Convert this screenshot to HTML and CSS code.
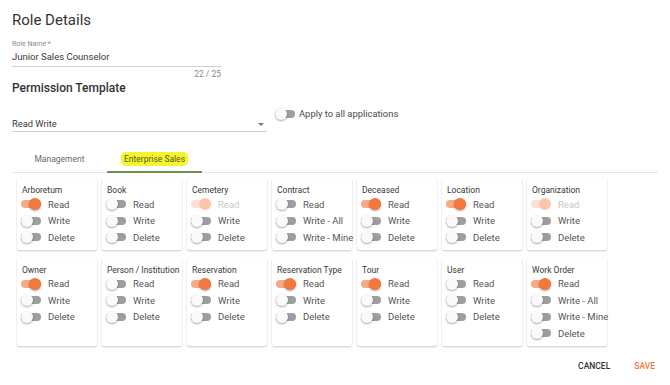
FILE: index.html
```html
<!DOCTYPE html>
<html>
<head>
	<meta charset="utf-8">
	<title>Role Details</title>
	<link rel="stylesheet" href="styles.css">
</head>
<body>

<div class="page">
	<h1>Role Details</h1>

	<div class="field">
		<label class="flabel">Role Name *</label>
		<div class="finput">Junior Sales Counselor</div>
		<div class="counter">22 / 25</div>
	</div>

	<h2>Permission Template</h2>

	<div class="template">
		<div class="select">
			<span>Read Write</span>
			<span class="arrow"></span>
		</div>
		<div class="apply">
			<span class="sw"></span>
			<span>Apply to all applications</span>
		</div>
	</div>

	<div class="tabs">
		<div class="tab">Management</div>
		<div class="tab active"><span class="hl">Enterprise Sales</span></div>
	</div>

	<div class="cards">
		<div class="card">
			<div class="ctitle">Arboretum</div>
			<div class="perm"><span class="sw on"></span>Read</div>
			<div class="perm"><span class="sw"></span>Write</div>
			<div class="perm"><span class="sw"></span>Delete</div>
		</div>
		<div class="card">
			<div class="ctitle">Book</div>
			<div class="perm"><span class="sw"></span>Read</div>
			<div class="perm"><span class="sw"></span>Write</div>
			<div class="perm"><span class="sw"></span>Delete</div>
		</div>
		<div class="card">
			<div class="ctitle">Cemetery</div>
			<div class="perm dis"><span class="sw on"></span>Read</div>
			<div class="perm"><span class="sw"></span>Write</div>
			<div class="perm"><span class="sw"></span>Delete</div>
		</div>
		<div class="card">
			<div class="ctitle">Contract</div>
			<div class="perm"><span class="sw"></span>Read</div>
			<div class="perm"><span class="sw"></span>Write - All</div>
			<div class="perm"><span class="sw"></span>Write - Mine</div>
		</div>
		<div class="card">
			<div class="ctitle">Deceased</div>
			<div class="perm"><span class="sw on"></span>Read</div>
			<div class="perm"><span class="sw"></span>Write</div>
			<div class="perm"><span class="sw"></span>Delete</div>
		</div>
		<div class="card">
			<div class="ctitle">Location</div>
			<div class="perm"><span class="sw on"></span>Read</div>
			<div class="perm"><span class="sw"></span>Write</div>
			<div class="perm"><span class="sw"></span>Delete</div>
		</div>
		<div class="card">
			<div class="ctitle">Organization</div>
			<div class="perm dis"><span class="sw on"></span>Read</div>
			<div class="perm"><span class="sw"></span>Write</div>
			<div class="perm"><span class="sw"></span>Delete</div>
		</div>

		<div class="card">
			<div class="ctitle">Owner</div>
			<div class="perm"><span class="sw on"></span>Read</div>
			<div class="perm"><span class="sw"></span>Write</div>
			<div class="perm"><span class="sw"></span>Delete</div>
		</div>
		<div class="card">
			<div class="ctitle">Person / Institution</div>
			<div class="perm"><span class="sw"></span>Read</div>
			<div class="perm"><span class="sw"></span>Write</div>
			<div class="perm"><span class="sw"></span>Delete</div>
		</div>
		<div class="card">
			<div class="ctitle">Reservation</div>
			<div class="perm"><span class="sw on"></span>Read</div>
			<div class="perm"><span class="sw"></span>Write</div>
			<div class="perm"><span class="sw"></span>Delete</div>
		</div>
		<div class="card">
			<div class="ctitle">Reservation Type</div>
			<div class="perm"><span class="sw on"></span>Read</div>
			<div class="perm"><span class="sw"></span>Write</div>
			<div class="perm"><span class="sw"></span>Delete</div>
		</div>
		<div class="card">
			<div class="ctitle">Tour</div>
			<div class="perm"><span class="sw on"></span>Read</div>
			<div class="perm"><span class="sw"></span>Write</div>
			<div class="perm"><span class="sw"></span>Delete</div>
		</div>
		<div class="card">
			<div class="ctitle">User</div>
			<div class="perm"><span class="sw"></span>Read</div>
			<div class="perm"><span class="sw"></span>Write</div>
			<div class="perm"><span class="sw"></span>Delete</div>
		</div>
		<div class="card">
			<div class="ctitle">Work Order</div>
			<div class="perm"><span class="sw on"></span>Read</div>
			<div class="perm"><span class="sw"></span>Write - All</div>
			<div class="perm"><span class="sw"></span>Write - Mine</div>
			<div class="perm"><span class="sw"></span>Delete</div>
		</div>
	</div>

	<div class="actions">
		<button class="btn">CANCEL</button>
		<button class="btn save">SAVE</button>
	</div>
</div>

</body>
</html>
```

FILE: styles.css
```css
body {
	margin: 0;
	background: white;
	font-family: Roboto, "Liberation Sans", sans-serif;
	color: #333;
}
.page {
	padding: 9px 12px 0 12px;
}

h1 {
	margin: 0;
	font-size: 15px;
	line-height: 22px;
	font-weight: 400;
	color: #333;
}

.field {
	width: 209px;
	margin-top: 8px;
}
.flabel {
	display: block;
	font-size: 7px;
	line-height: 10px;
	color: #8a8a8a;
}
.finput {
	font-size: 9.5px;
	line-height: 14px;
	margin-top: 1px;
	padding-bottom: 2px;
	border-bottom: 1px solid #cfcfcf;
	color: #3a3a3a;
}
.counter {
	margin-top: 2px;
	font-size: 8.5px;
	line-height: 10px;
	text-align: right;
	color: #8a8a8a;
}

h2 {
	margin: 1px 0 0 0;
	font-size: 12px;
	line-height: 16px;
	font-weight: 500;
	color: #333;
}

.template {
	display: flex;
	align-items: flex-start;
}
.select {
	width: 255px;
	padding-top: 21px;
	display: flex;
	align-items: center;
	justify-content: space-between;
	font-size: 9.3px;
	line-height: 14px;
	border-bottom: 1px solid #cfcfcf;
	color: #3a3a3a;
}
.arrow {
	width: 0;
	height: 0;
	margin-right: 3px;
	border-left: 3px solid transparent;
	border-right: 3px solid transparent;
	border-top: 3px solid #777;
}
.apply {
	margin-top: 12px;
	margin-left: 8px;
	display: flex;
	align-items: center;
	gap: 4px;
	font-size: 9.4px;
	line-height: 12px;
	color: #4a4a4a;
}

.tabs {
	display: flex;
	margin-top: 14px;
	border-bottom: 1px solid #e6e6e6;
}
.tab {
	width: 95px;
	height: 26px;
	line-height: 26px;
	text-align: center;
	font-size: 8.5px;
	color: #6a6a6a;
}
.tab.active {
	height: 25px;
	border-bottom: 2px solid #6f8f52;
	margin-bottom: -1px;
}
.hl {
	background: #f4f52c;
	color: #5a5a2a;
	padding: 2px 3px;
	border-radius: 5px;
}

.cards {
	display: grid;
	grid-template-columns: repeat(7, 80px);
	gap: 8px 5px;
	margin-top: 5px;
	padding-left: 5px;
}
.card {
	padding: 6px 5px 4px 5px;
	box-shadow: 0 1px 2px rgba(0, 0, 0, .2), 0 0 1px rgba(0, 0, 0, .08);
	border-radius: 2px;
}
.ctitle {
	font-size: 8.5px;
	line-height: 12px;
	color: #383838;
	white-space: nowrap;
}
.perm {
	display: flex;
	align-items: center;
	height: 16.5px;
	font-size: 9.5px;
	color: #555;
	white-space: nowrap;
}
.perm.dis {
	color: #c8c8c8;
}

.sw {
	position: relative;
	display: inline-block;
	flex: none;
	width: 20px;
	height: 12px;
	margin-right: 7px;
}
.perm .sw {
	margin-left: -1px;
}
.sw::before {
	content: "";
	position: absolute;
	left: 0;
	right: 0;
	top: 2px;
	height: 8px;
	border-radius: 4px;
	background: #9e9e9e;
}
.sw::after {
	content: "";
	position: absolute;
	left: 0;
	top: 0;
	width: 12px;
	height: 12px;
	border-radius: 50%;
	background: #fafafa;
	box-shadow: 0 1px 2px rgba(0, 0, 0, .35);
}
.sw.on::before {
	background: #f8a986;
}
.sw.on::after {
	left: 8px;
	background: #f4783d;
}
.dis .sw.on::before {
	background: #fde0d2;
}
.dis .sw.on::after {
	background: #fcc6ad;
	box-shadow: none;
}
.apply .sw {
	margin-right: 0;
}

.actions {
	display: flex;
	justify-content: flex-end;
	gap: 24px;
	margin-top: 13px;
	padding-right: 3px;
}
.btn {
	border: 0;
	background: none;
	padding: 0;
	font-family: Roboto, "Liberation Sans", sans-serif;
	font-size: 8.5px;
	line-height: 14px;
	font-weight: 500;
	color: #333;
}
.btn.save {
	color: #f4783d;
}
```
